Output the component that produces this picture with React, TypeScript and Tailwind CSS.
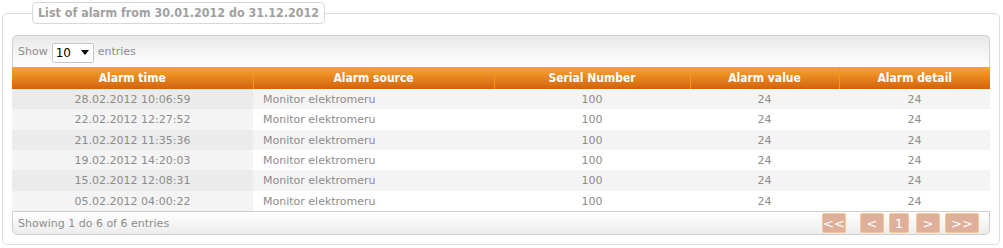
import React from "react";

const rows = [
  "28.02.2012 10:06:59",
  "22.02.2012 12:27:52",
  "21.02.2012 11:35:36",
  "19.02.2012 14:20:03",
  "15.02.2012 12:08:31",
  "05.02.2012 04:00:22",
];

const font = { fontFamily: '"DejaVu Sans", Verdana, sans-serif' };
const cond = { fontFamily: '"DejaVu Sans Condensed", "DejaVu Sans", sans-serif' };

const buttons = [
  { t: "<<", c: "w-[24px]" },
  { t: "<", c: "w-[24px] ml-[14px]" },
  { t: "1", c: "w-[20px] ml-[5px]" },
  { t: ">", c: "w-[24px] ml-[7px]" },
  { t: ">>", c: "w-[34px] ml-[5px]" },
];

export default function App() {
  return (
    <div className="w-[1003px] h-[248px] bg-white text-[11px] text-[#8c8c8c]" style={font}>
      <fieldset className="ml-[2px] mt-[2px] w-[998px] h-[243px] border border-[#dcdcdc] rounded-[5px] pl-[9px] pr-[9px]">
        <legend
          className="ml-[20px] px-[5px] h-[22px] border border-[#d8d8d8] rounded-[4px] bg-white text-[12.4px] font-bold text-[#a0a0a0] leading-[20px]"
          style={cond}
        >
          List of alarm from 30.01.2012 do 31.12.2012
        </legend>
        <div className="mt-[11px] w-[978px]">
          <div className="h-[32px] border border-b-0 border-[#cfcfcf] rounded-t-[5px] bg-gradient-to-b from-[#e9e9e9] to-white flex items-center pl-[5px] pt-[2px] gap-[4px]">
            <span>Show</span>
            <div className="w-[42px] h-[20px] border border-[#c8c8c8] rounded-[2px] bg-white flex items-center justify-between pl-[3px] pr-[4px] text-[12px] text-black">
              <span>10</span>
              <svg width="8" height="5" viewBox="0 0 8 5"><path d="M0 0h8L4 5z" fill="#000" /></svg>
            </div>
            <span>entries</span>
          </div>
          <table className="w-full border-collapse">
            <thead>
              <tr className="h-[22px] bg-gradient-to-b from-[#faa52e] to-[#d2620c] text-white font-bold text-[12px]" style={cond}>
                <th className="w-[241px] border-r border-[#f7951f] font-bold p-0 pb-[1px]">Alarm time</th>
                <th className="w-[241px] border-r border-[#f7951f] font-bold p-0 pb-[1px]">Alarm source</th>
                <th className="w-[196px] border-r border-[#f7951f] font-bold p-0 pb-[1px]">Serial Number</th>
                <th className="w-[149px] border-r border-[#f7951f] font-bold p-0 pb-[1px]">Alarm value</th>
                <th className="font-bold p-0 pb-[1px]">Alarm detail</th>
              </tr>
            </thead>
            <tbody>
              {rows.map((t, i) => (
                <tr key={t} className={i % 2 === 0 ? "h-[20.33px] bg-[#f4f4f4]" : "h-[20.33px] bg-white"}>
                  <td className={i % 2 === 0 ? "text-center bg-[#ebebeb] p-0 pt-[2px]" : "text-center bg-[#f4f4f4] p-0 pt-[2px]"}>{t}</td>
                  <td className="p-0 pt-[2px] pl-[10px]">Monitor elektromeru</td>
                  <td className="text-center p-0 pt-[2px]">100</td>
                  <td className="text-center p-0 pt-[2px]">24</td>
                  <td className="text-center p-0 pt-[2px]">24</td>
                </tr>
              ))}
            </tbody>
          </table>
          <div className="h-[24px] border border-[#cfcfcf] rounded-b-[5px] bg-gradient-to-b from-white to-[#ececec] flex items-center justify-between pl-[5px] pr-[10px]">
            <span className="mt-[3px]">Showing 1 do 6 of 6 entries</span>
            <div className="flex text-white text-[13px] mt-[1px]">
              {buttons.map((b) => (
                <div
                  key={b.t}
                  className={
                    "h-[20px] border border-[#f8c88e] rounded-[2px] bg-[#deb09b] flex items-center justify-center " + b.c
                  }
                >
                  {b.t}
                </div>
              ))}
            </div>
          </div>
        </div>
      </fieldset>
    </div>
  );
}
